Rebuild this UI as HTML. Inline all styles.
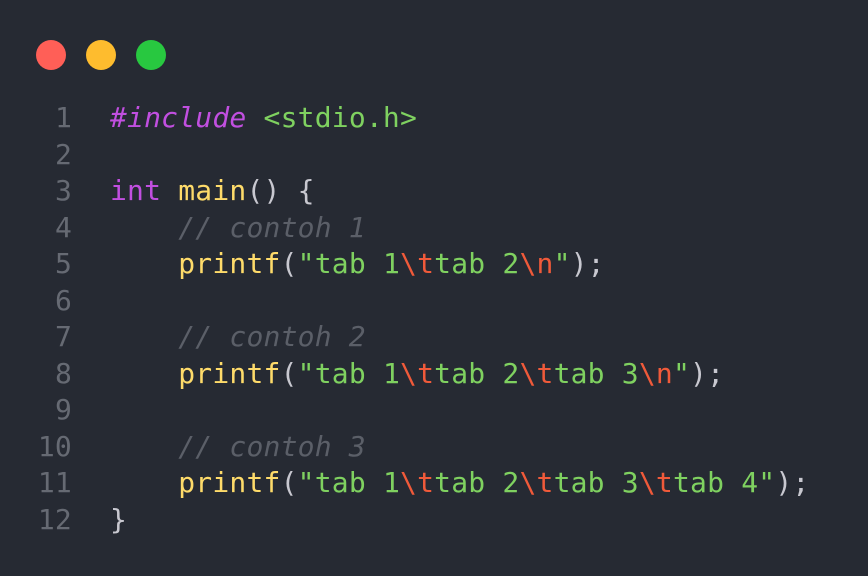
<!DOCTYPE html>
<html><head><style>
html,body{margin:0;padding:0;width:868px;height:576px;background:#262a33;overflow:hidden}
.d{position:absolute;top:40px;width:30px;height:30px;border-radius:50%}
pre{position:absolute;left:0;top:100px;margin:0;font-family:"DejaVu Sans Mono","Liberation Mono",monospace;font-size:28px;line-height:36.55px;color:#c8c8d0;letter-spacing:0.2px}
.n{display:inline-block;width:72px;text-align:right;color:#666a73;margin-right:38px}
.k{color:#c14fe0}.i{color:#c14fe0;font-style:italic}.s{color:#7fd160}.f{color:#fedb6a}.c{color:#5b5f68;font-style:italic}.e{color:#f05a3a}
</style></head><body>
<div class="d" style="left:36px;background:#ff5f57"></div>
<div class="d" style="left:86px;background:#febc2e"></div>
<div class="d" style="left:136px;background:#28c840"></div>
<pre><span class="n">1</span><span class="i">#include</span> <span class="s">&lt;stdio.h&gt;</span>
<span class="n">2</span>
<span class="n">3</span><span class="k">int</span> <span class="f">main</span>() {
<span class="n">4</span>    <span class="c">// contoh 1</span>
<span class="n">5</span>    <span class="f">printf</span>(<span class="s">"tab 1</span><span class="e">\t</span><span class="s">tab 2</span><span class="e">\n</span><span class="s">"</span>);
<span class="n">6</span>
<span class="n">7</span>    <span class="c">// contoh 2</span>
<span class="n">8</span>    <span class="f">printf</span>(<span class="s">"tab 1</span><span class="e">\t</span><span class="s">tab 2</span><span class="e">\t</span><span class="s">tab 3</span><span class="e">\n</span><span class="s">"</span>);
<span class="n">9</span>
<span class="n">10</span>    <span class="c">// contoh 3</span>
<span class="n">11</span>    <span class="f">printf</span>(<span class="s">"tab 1</span><span class="e">\t</span><span class="s">tab 2</span><span class="e">\t</span><span class="s">tab 3</span><span class="e">\t</span><span class="s">tab 4"</span>);
<span class="n">12</span>}</pre>
</body></html>
